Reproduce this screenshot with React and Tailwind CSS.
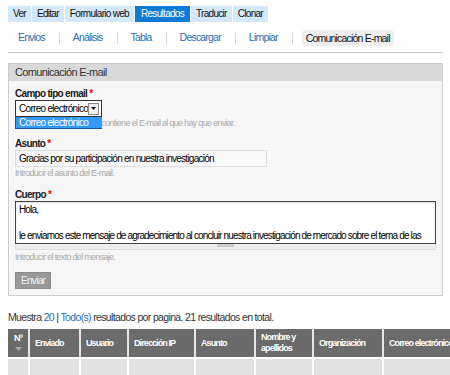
import React from 'react';

const topTabs = ['Ver', 'Editar', 'Formulario web', 'Resultados', 'Traducir', 'Clonar'];
const subTabs = ['Envios', 'Análisis', 'Tabla', 'Descargar', 'Limpiar'];
const columns = [
  { label: 'Nº', w: 'w-[22px]' },
  { label: 'Enviado', w: 'w-[51px]' },
  { label: 'Usuario', w: 'w-[48px]' },
  { label: 'Dirección IP', w: 'w-[67px]' },
  { label: 'Asunto', w: 'w-[60px]' },
  { label: 'Nombre y apellidos', w: 'w-[58px]' },
  { label: 'Organización', w: 'w-[70px]' },
  { label: 'Correo electrónico', w: 'w-[100px]' },
];

const Label = ({ children }) => (
  <label className="block text-[10px] font-bold leading-[12px] tracking-[-0.7px] text-[#1a1a1a]">
    {children} <span className="text-[#e00]">*</span>
  </label>
);

const Help = ({ children }) => (
  <p className="text-[9px] leading-[12px] tracking-[-0.7px] text-[#aaa] whitespace-nowrap">{children}</p>
);

export default function App() {
  return (
    <div
      className="w-[450px] h-[375px] overflow-hidden bg-white pl-2 pr-[7px] pt-[6px] text-[10px] tracking-[-0.7px] text-[#111]"
      style={{ fontFamily: '"Liberation Sans", Arial, sans-serif' }}
    >
      {/* primary tabs */}
      <div className="flex gap-px h-4">
        {topTabs.map((t) => (
          <span
            key={t}
            className={`px-[5px] leading-4 ${
              t === 'Resultados' ? 'bg-[#0b7bd5] text-white px-[6px]' : 'bg-[#d3e8fa] text-[#111]'
            }`}
          >
            {t}
          </span>
        ))}
      </div>

      {/* secondary tabs */}
      <div className="flex items-center mt-2 h-4 pl-[10px] text-[10.5px] tracking-[-0.8px]">
        {subTabs.map((t) => (
          <React.Fragment key={t}>
            <a className="text-[#2b6fb6] pr-[14px]">{t}</a>
            <span className="h-3 w-px bg-[#d8d8d8] mr-[13px]"></span>
          </React.Fragment>
        ))}
        <span className="bg-[#eeeeee] rounded-[4px] px-1 leading-4 text-[#111] -ml-1">Comunicación E-mail</span>
      </div>

      <div className="mt-[6px] border-b border-[#cccccc]"></div>

      {/* fieldset */}
      <div className="mt-[10px] border border-[#cccccc] bg-[#f6f6f6]">
        <div className="h-[17px] bg-[#d9d9d9] px-[6px] text-[11px] leading-[17px] tracking-[-0.65px] text-[#333]">
          Comunicación E-mail
        </div>
        <div className="px-[6px] pt-[7px] pb-[6px]">
          <Label>Campo tipo email</Label>
          <div className="relative">
            <div className="flex items-center w-[87px] h-[17px] border border-[#333] bg-white pl-[3px] pr-[2px]">
              <span className="flex-1 leading-[15px] text-black whitespace-nowrap overflow-hidden">Correo electrónico</span>
              <span className="flex items-center justify-center w-[11px] h-[12px] border border-[#888] bg-[#eef2f8]">
                <svg width="5" height="3" viewBox="0 0 5 3"><path d="M0 0h5L2.5 3z" fill="#111" /></svg>
              </span>
            </div>
            <div className="absolute left-0 top-[17px] w-[87px] h-[12px] bg-[#3399ff] border-l border-b border-[#1d4f9a] text-white leading-[11px] pl-[3px] whitespace-nowrap overflow-hidden">
              Correo electrónico
            </div>
            <Help>Seleccione el campo que contiene el E-mail al que hay que enviar.</Help>
          </div>

          <div className="mt-[9px]">
            <Label>Asunto</Label>
            <div className="w-[252px] h-[17px] border border-[#dddddd] bg-[#f8f8f8] pl-[3px] leading-[15px] tracking-[-0.75px] text-black whitespace-nowrap">
              Gracias por su participación en nuestra investigación
            </div>
            <Help>Introducir el asunto del E-mail.</Help>
          </div>

          <div className="mt-[10px]">
            <Label>Cuerpo</Label>
            <div className="w-[421px] h-[43px] border border-[#444] bg-white pl-[3px] pt-px leading-[13px] tracking-[-0.85px] text-black shadow-[inset_0_1px_2px_rgba(0,0,0,0.15)] overflow-hidden whitespace-nowrap">
              <div>Hola,</div>
              <div>&nbsp;</div>
              <div>le enviamos este mensaje de agradecimiento al concluir nuestra investigación de mercado sobre el tema de las</div>
            </div>
            <div className="flex justify-center w-[421px] h-[6px] border border-t-0 border-[#dddddd] bg-[#eeeeee]">
              <span className="w-[17px] h-[3px] bg-[#cccccc]"></span>
            </div>
            <div className="mt-px">
              <Help>Introducir el texto del mensaje.</Help>
            </div>
          </div>

          <button className="mt-[9px] h-[17px] px-[5px] bg-[#999999] border border-[#8a8a8a] text-[#f4f4f4] leading-[15px]">
            Enviar
          </button>
        </div>
      </div>

      <p className="mt-[15px] text-[10.5px] leading-[12px] tracking-[-0.65px] text-[#333] whitespace-nowrap">
        Muestra <a className="text-[#2b6fb6]">20</a> | <a className="text-[#2b6fb6]">Todo(s)</a> resultados por pagina. 21 resultados en total.
      </p>

      {/* results table */}
      <div className="mt-[6px] w-[476px]">
        <div className="flex h-[28px] bg-[#6b6b6b] text-white text-[9px] font-bold leading-[11px] tracking-[-0.9px]">
          {columns.map((c, i) => (
            <div
              key={c.label}
              className={`${c.w} shrink-0 flex border-r-2 border-[#e6e6e6] overflow-hidden ${
                i === 0 ? 'flex-col items-center pt-[4px]' : 'items-center pl-[5px] whitespace-normal'
              }`}
            >
              {i === 0 ? (
                <>
                  <span>Nº</span>
                  <svg width="7" height="4" viewBox="0 0 7 4" className="mt-[3px]"><path d="M0 0h7L3.5 4z" fill="#a8a8a8" /></svg>
                </>
              ) : (
                <span className={i === 7 ? 'whitespace-nowrap' : ''}>{c.label}</span>
              )}
            </div>
          ))}
        </div>
        <div className="flex h-[20px] mt-[2px] bg-[#e2e2e2]">
          {columns.map((c) => (
            <div key={c.label} className={`${c.w} shrink-0 border-r-2 border-white`}></div>
          ))}
        </div>
      </div>
    </div>
  );
}
